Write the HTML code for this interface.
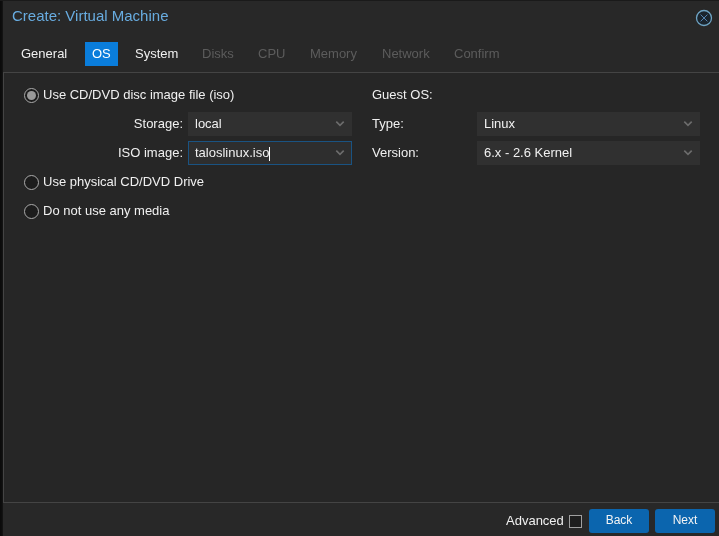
<!DOCTYPE html>
<html><head><meta charset="utf-8">
<style>
*{box-sizing:border-box;margin:0;padding:0}
html,body{width:719px;height:536px;overflow:hidden;background:#282828}
body{position:relative;font-family:"Liberation Sans",sans-serif;font-size:13px;color:#f0f0f0}
.abs{position:absolute;will-change:transform}
.edgeL0{left:0;top:0;width:1px;height:536px;background:#0b0b0b}
.edgeL1{left:1px;top:0;width:1px;height:536px;background:#0d0d0d}
.edgeL2{left:2px;top:0;width:1px;height:536px;background:#131313}
.edgeT{left:0;top:0;width:719px;height:1px;background:#1a1a1a}
.title{left:12px;top:7px;font-size:15px;color:#68ace0;white-space:nowrap;line-height:18px}
.close{left:695px;top:9px;width:18px;height:18px}
.tab{top:42px;height:24px;line-height:24px;white-space:nowrap;color:#f0f0f0}
.tab.dis{color:#5c5c5c}
.tab.act{background:#0a7ddb;color:#fff;padding:0 7px}
.panel{left:3px;top:72px;width:716px;height:431px;border-top:1px solid #444;border-left:1px solid #444;border-bottom:1px solid #444;background:#262626}
.lbl{white-space:nowrap;line-height:16px}
.radio{width:15px;height:15px;border-radius:50%;border:1.2px solid #ababab;background:#1c1c1c}
.radio.on::after{content:"";position:absolute;left:2px;top:2px;width:9px;height:9px;border-radius:50%;background:#999}
.field{height:24px;background:#303030;line-height:24px;padding-left:7px;white-space:nowrap}
.field.focus{border:1px solid #1a5382;background:#2e2e2e;padding-left:6px;line-height:22px}
.chev{position:absolute;right:7px;top:8px;width:10px;height:7px}
.btn{top:509px;width:60px;height:24px;background:#0b65ae;border-radius:3px;color:#f4f4f4;text-align:center;line-height:22px;font-size:12px}
.sep{left:0;top:502px;width:719px;height:1px;background:#444}
.chk{left:569px;top:515px;width:13px;height:13px;border:1px solid #a0a0a0;background:#1e1e1e}
</style></head><body>
<div class="abs panel"></div>
<div class="abs sep"></div>
<div class="abs edgeL0"></div><div class="abs edgeL1"></div><div class="abs edgeL2"></div><div class="abs edgeT"></div>

<div class="abs title">Create: Virtual Machine</div>
<svg class="abs close" viewBox="0 0 18 18"><circle cx="9" cy="9" r="7.5" fill="#1a242d" stroke="#6ea4c4" stroke-width="1.3"/><path d="M5.6 5.6L12.4 12.4M12.4 5.6L5.6 12.4" stroke="#5b8fc0" stroke-width="0.9"/></svg>

<div class="abs tab" style="left:21px">General</div>
<div class="abs tab act" style="left:85px">OS</div>
<div class="abs tab" style="left:135px">System</div>
<div class="abs tab dis" style="left:202px">Disks</div>
<div class="abs tab dis" style="left:258px">CPU</div>
<div class="abs tab dis" style="left:310px">Memory</div>
<div class="abs tab dis" style="left:382px">Network</div>
<div class="abs tab dis" style="left:454px">Confirm</div>

<div class="abs radio on" style="left:24px;top:88px"></div>
<div class="abs lbl" style="left:43px;top:87px">Use CD/DVD disc image file (iso)</div>
<div class="abs lbl" style="left:100px;width:83px;text-align:right;top:116px">Storage:</div>
<div class="abs lbl" style="left:100px;width:83px;text-align:right;top:145px">ISO image:</div>
<div class="abs field" style="left:188px;top:112px;width:164px">local<svg class="chev" viewBox="0 0 10 7"><path d="M1.3 1.6L5 5.4L8.7 1.6" fill="none" stroke="#6c6c6c" stroke-width="1.6"/></svg></div>
<div class="abs field focus" style="left:188px;top:141px;width:164px">taloslinux.iso<span style="display:inline-block;width:1px;height:14px;background:#fff;vertical-align:-4px;margin-left:0"></span><svg class="chev" style="right:6px;top:7px" viewBox="0 0 10 7"><path d="M1.3 1.6L5 5.4L8.7 1.6" fill="none" stroke="#6c6c6c" stroke-width="1.6"/></svg></div>
<div class="abs radio" style="left:24px;top:175px"></div>
<div class="abs lbl" style="left:43px;top:174px">Use physical CD/DVD Drive</div>
<div class="abs radio" style="left:24px;top:204px"></div>
<div class="abs lbl" style="left:43px;top:203px">Do not use any media</div>

<div class="abs lbl" style="left:372px;top:87px">Guest OS:</div>
<div class="abs lbl" style="left:372px;top:116px">Type:</div>
<div class="abs lbl" style="left:372px;top:145px">Version:</div>
<div class="abs field" style="left:477px;top:112px;width:223px">Linux<svg class="chev" viewBox="0 0 10 7"><path d="M1.3 1.6L5 5.4L8.7 1.6" fill="none" stroke="#6c6c6c" stroke-width="1.6"/></svg></div>
<div class="abs field" style="left:477px;top:141px;width:223px">6.x - 2.6 Kernel<svg class="chev" viewBox="0 0 10 7"><path d="M1.3 1.6L5 5.4L8.7 1.6" fill="none" stroke="#6c6c6c" stroke-width="1.6"/></svg></div>

<div class="abs lbl" style="left:506px;top:513px">Advanced</div>
<div class="abs chk"></div>
<div class="abs btn" style="left:589px">Back</div>
<div class="abs btn" style="left:655px">Next</div>
</body></html>
